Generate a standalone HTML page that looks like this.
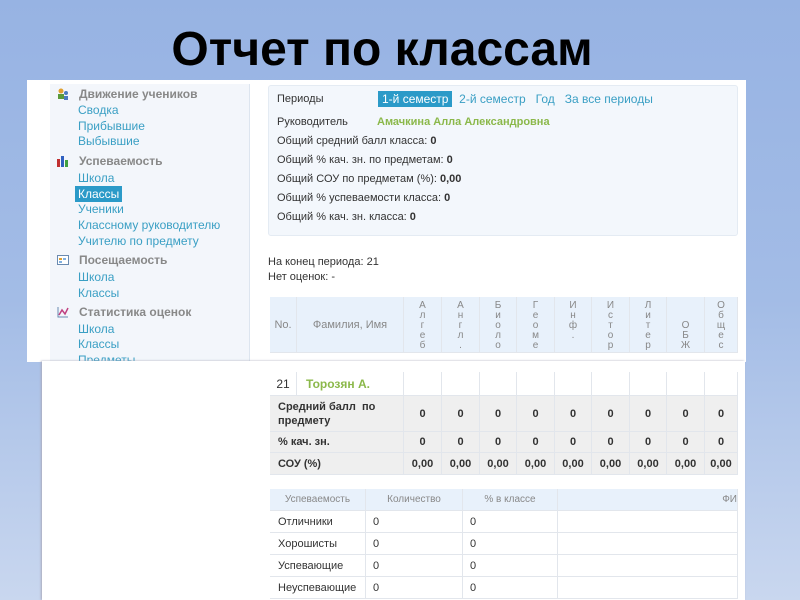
<!DOCTYPE html>
<html><head><meta charset="utf-8"><style>
*{margin:0;padding:0;box-sizing:border-box}
body{width:800px;height:600px;overflow:hidden;position:relative;font-family:"Liberation Sans","DejaVu Sans",sans-serif;background:linear-gradient(180deg,#97b3e3 0%,#a3bce6 50%,#c9d7ef 100%);}
.title{position:absolute;left:-18px;width:800px;top:22px;text-align:center;font-size:48px;font-weight:bold;color:#000}
.p1{position:absolute;left:27px;top:80px;width:719px;height:282px;background:#fff}
.side{position:absolute;left:50px;top:84px;width:200px;height:278px;background:#f3f6fb;border-right:1px solid #dde5ef}
.side div{position:absolute;font-size:12px;color:#3a9fc4;left:28px}
.side .h{color:#888;font-weight:bold;left:29px}
.ic{position:absolute;left:7px;width:12px;height:12px}
.p2{position:absolute;left:42px;top:361px;width:703px;height:239px;background:#fff;box-shadow:-1px 0 2px #aab}
.info{position:absolute;left:268px;top:85px;width:470px;height:151px;background:#f3f7fc;border:1px solid #e4ebf3;border-radius:3px}
.t{position:absolute;font-size:11px;color:#333;white-space:nowrap}
.lnk{color:#3a9fc4;font-size:12px}
.sel{background:#2b9ac8;color:#fff;padding:1px 4px}
.g{color:#8bb84a;font-weight:bold}
.cell{position:absolute;border-right:1px solid #e2e6ec;border-bottom:1px solid #e2e6ec;font-size:11px;color:#333;display:flex;align-items:center;justify-content:center}
.hd{background:#e8f1fb;color:#888}
.gr{background:#efefef;font-weight:bold;color:#333}
.vt{font-size:10px;line-height:10px;text-align:center;color:#888;word-break:break-all;align-items:flex-start;padding-top:4px}
</style></head><body>
<div class="title">Отчет по классам</div>
<div class="p1"></div>
<div class="side">
<svg class="ic" style="top:4px" viewBox="0 0 12 12"><circle cx="4" cy="3" r="2.5" fill="#e0a030"/><rect x="1" y="6" width="6" height="5" fill="#5a9a3a"/><circle cx="9" cy="5" r="2" fill="#4a7ac0"/><rect x="7" y="8" width="4" height="4" fill="#4a7ac0"/></svg>
<div class="h" style="top:3px">Движение учеников</div>
<div style="top:19px">Сводка</div>
<div style="top:35px">Прибывшие</div>
<div style="top:50px">Выбывшие</div>
<svg class="ic" style="top:71px" viewBox="0 0 12 12"><rect x="0" y="4" width="3" height="8" fill="#c03030"/><rect x="4" y="1" width="3" height="11" fill="#3060c0"/><rect x="8" y="5" width="3" height="7" fill="#40a040"/></svg>
<div class="h" style="top:70px">Успеваемость</div>
<div style="top:87px">Школа</div>
<div style="top:102px;left:25px;background:#2b9ac8;color:#fff;padding:1px 3px">Классы</div>
<div style="top:118px">Ученики</div>
<div style="top:134px">Классному руководителю</div>
<div style="top:150px">Учителю по предмету</div>
<svg class="ic" style="top:170px" viewBox="0 0 12 12"><rect x="0.5" y="1.5" width="11" height="9" fill="#fff" stroke="#6a8ab0"/><rect x="2" y="4" width="3" height="2" fill="#e0a030"/><rect x="6" y="4" width="3" height="2" fill="#80b0e0"/><rect x="2" y="7" width="3" height="2" fill="#80b0e0"/></svg>
<div class="h" style="top:169px">Посещаемость</div>
<div style="top:186px">Школа</div>
<div style="top:202px">Классы</div>
<svg class="ic" style="top:222px" viewBox="0 0 12 12"><path d="M1 1V11H11" stroke="#6a8ab0" fill="none"/><path d="M2 9L5 4L8 8L11 2" stroke="#c04080" fill="none" stroke-width="1.5"/></svg>
<div class="h" style="top:221px">Статистика оценок</div>
<div style="top:238px">Школа</div>
<div style="top:253px">Классы</div>
<div style="top:269px">Предметы</div>
</div>
<div class="info"></div>
<div class="t" style="left:277px;top:93px">Периоды</div>
<div class="t lnk" style="left:378px;top:92px"><span class="sel">1-й семестр</span>&nbsp; 2-й семестр &nbsp; Год &nbsp; За все периоды</div>
<div class="t" style="left:277px;top:116px">Руководитель</div>
<div class="t g" style="left:377px;top:116px">Амачкина Алла Александровна</div>
<div class="t" style="left:277px;top:135px">Общий средний балл класса: <b>0</b></div>
<div class="t" style="left:277px;top:154px">Общий % кач. зн. по предметам: <b>0</b></div>
<div class="t" style="left:277px;top:173px">Общий СОУ по предметам (%): <b>0,00</b></div>
<div class="t" style="left:277px;top:192px">Общий % успеваемости класса: <b>0</b></div>
<div class="t" style="left:277px;top:211px">Общий % кач. зн. класса: <b>0</b></div>
<div class="t" style="left:268px;top:256px">На конец периода: 21</div>
<div class="t" style="left:268px;top:271px">Нет оценок: -</div>
<div class="p2"></div>
<div id="tb"></div>
<script>
var cx=[270,297,404,442,480,517,555,592,630,667,705,738];
var subj=["Алгеб","Англ.","Биоло","Геоме","Инф.","Истор","Литер","ОБЖ","Общес"];
var h="";
function c(x,y,w,hh,cls,txt,st){h+='<div class="cell '+cls+'" style="left:'+x+'px;top:'+y+'px;width:'+w+'px;height:'+hh+'px;'+(st||'')+'">'+txt+'</div>';}
c(270,297,27,56,"hd","No.");c(297,297,107,56,"hd","Фамилия, Имя");
for(var i=0;i<9;i++){var s=subj[i];var pad=(s=="ОБЖ")?"padding-top:24px":"";c(cx[i+2],297,cx[i+3]-cx[i+2],56,"hd vt",s.split("").join("<br>"),pad);}
c(270,372,27,24,"","21","font-size:12px");c(297,372,107,24,"","<span style='color:#8bb84a;font-weight:bold;font-size:12px'>Торозян А.</span>","justify-content:flex-start;padding-left:9px");
for(var i=0;i<9;i++)c(cx[i+2],372,cx[i+3]-cx[i+2],24,"","");
var rows=[[396,36,"Средний балл &nbsp;по<br>предмету","0"],[432,21,"% кач. зн.","0"],[453,22,"СОУ (%)","0,00"]];
rows.forEach(function(r){c(270,r[0],134,r[1],"gr",r[2],"justify-content:flex-start;padding-left:8px;line-height:14px");for(var i=0;i<9;i++)c(cx[i+2],r[0],cx[i+3]-cx[i+2],r[1],"gr",r[3]);});
var bx=[270,366,463,558,738];
var bh=["Успеваемость","Количество","% в классе","<span style='margin-left:auto'>ФИ</span>"];
for(var i=0;i<4;i++)c(bx[i],489,bx[i+1]-bx[i],22,"hd",bh[i],"font-size:10px");
var names=["Отличники","Хорошисты","Успевающие","Неуспевающие"];
for(var r=0;r<4;r++){var y=511+r*22;c(270,y,96,22,"",names[r],"justify-content:flex-start;padding-left:8px");c(366,y,97,22,"","0","justify-content:flex-start;padding-left:7px");c(463,y,95,22,"","0","justify-content:flex-start;padding-left:7px");c(558,y,180,22,"","");}
document.getElementById("tb").innerHTML=h;
</script>
</body></html>
